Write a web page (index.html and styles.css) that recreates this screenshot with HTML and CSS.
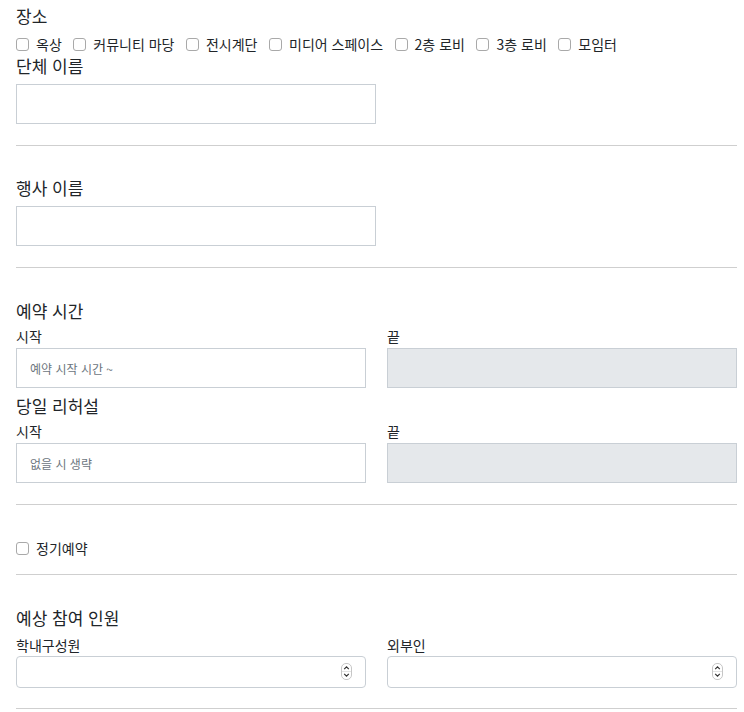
FILE: index.html
```html
<!DOCTYPE html>
<html lang="ko">
<head>
<meta charset="utf-8">
<link rel="stylesheet" href="styles.css">
</head>
<body>
<div class="page">
  <section class="sec sec-first">
    <h3 class="title">장소</h3>
    <div class="checks">
      <label class="check"><input type="checkbox"><span>옥상</span></label>
      <label class="check"><input type="checkbox"><span>커뮤니티 마당</span></label>
      <label class="check"><input type="checkbox"><span>전시계단</span></label>
      <label class="check"><input type="checkbox"><span>미디어 스페이스</span></label>
      <label class="check"><input type="checkbox"><span>2층 로비</span></label>
      <label class="check"><input type="checkbox"><span>3층 로비</span></label>
      <label class="check"><input type="checkbox"><span>모임터</span></label>
    </div>
    <h3 class="title">단체 이름</h3>
    <input class="text wide" type="text">
  </section>
  <hr class="rule">
  <section class="sec sec-second">
    <h3 class="title">행사 이름</h3>
    <input class="text wide" type="text">
  </section>
  <hr class="rule">
  <section class="sec">
    <h3 class="title">예약 시간</h3>
    <div class="cols">
      <div class="col">
        <div class="lbl">시작</div>
        <input class="text" type="text" placeholder="예약 시작 시간 ~">
      </div>
      <div class="col">
        <div class="lbl">끝</div>
        <input class="text" type="text" disabled>
      </div>
    </div>
    <h3 class="title title-sub">당일 리허설</h3>
    <div class="cols">
      <div class="col">
        <div class="lbl">시작</div>
        <input class="text" type="text" placeholder="없을 시 생략">
      </div>
      <div class="col">
        <div class="lbl">끝</div>
        <input class="text" type="text" disabled>
      </div>
    </div>
  </section>
  <hr class="rule">
  <section class="sec sec-check">
    <label class="check"><input type="checkbox"><span>정기예약</span></label>
  </section>
  <hr class="rule">
  <section class="sec sec-last">
    <h3 class="title">예상 참여 인원</h3>
    <div class="cols">
      <div class="col">
        <div class="lbl">학내구성원</div>
        <div class="numwrap">
          <input class="num" type="number">
          <svg class="spin" width="11" height="17" viewBox="0 0 11 17"><rect x="0.5" y="0.5" width="10" height="16" rx="4.5" fill="#fff" stroke="#c6c6c6"/><line x1="1" y1="8.5" x2="10" y2="8.5" stroke="#e4e4e4"/><path d="M3.2 6.2 L5.5 3.9 L7.8 6.2" fill="none" stroke="#333" stroke-width="1.2"/><path d="M3.2 10.8 L5.5 13.1 L7.8 10.8" fill="none" stroke="#333" stroke-width="1.2"/></svg>
        </div>
      </div>
      <div class="col">
        <div class="lbl">외부인</div>
        <div class="numwrap">
          <input class="num" type="number">
          <svg class="spin" width="11" height="17" viewBox="0 0 11 17"><rect x="0.5" y="0.5" width="10" height="16" rx="4.5" fill="#fff" stroke="#c6c6c6"/><line x1="1" y1="8.5" x2="10" y2="8.5" stroke="#e4e4e4"/><path d="M3.2 6.2 L5.5 3.9 L7.8 6.2" fill="none" stroke="#333" stroke-width="1.2"/><path d="M3.2 10.8 L5.5 13.1 L7.8 10.8" fill="none" stroke="#333" stroke-width="1.2"/></svg>
        </div>
      </div>
    </div>
  </section>
  <hr class="rule">
</div>
</body>
</html>
```
FILE: styles.css
```css
html, body {
  margin: 0;
  padding: 0;
  background: #fff;
}
body {
  font-family: "Noto Sans CJK KR", "Noto Sans", sans-serif;
  color: #212529;
}
.page {
  width: 721px;
  padding: 4px 0 0 16px;
}
.sec {
  padding: 31px 0 21px;
}
.sec-first {
  padding-top: 0;
}
.sec-second {
  padding-top: 30px;
}
.sec-check {
  padding: 33px 0 16px;
}
.sec-last {
  padding-bottom: 20px;
}
.title {
  margin: 0;
  font-size: 17px;
  font-weight: 400;
  line-height: 24px;
}
.title-sub {
  margin-top: 6px;
}
.checks {
  display: flex;
  flex-wrap: wrap;
  margin-top: 6px;
  height: 20px;
}
.check {
  display: flex;
  align-items: center;
  height: 20px;
  font-size: 14px;
  margin-right: 11.5px;
}
.check input {
  -webkit-appearance: none;
  appearance: none;
  box-sizing: border-box;
  margin: 0 7px 0 0;
  width: 13px;
  height: 13px;
  border: 1px solid #a9a9a9;
  border-radius: 3px;
  background: #fff;
}
.text {
  display: block;
  box-sizing: border-box;
  width: 100%;
  height: 40px;
  margin: 0;
  padding: 0 13px;
  border: 1px solid #c9cfd5;
  border-radius: 0;
  background: #fff;
  font-family: inherit;
  font-size: 12px;
  color: #212529;
  outline: none;
}
.text::placeholder {
  color: #6c757d;
}
.text:disabled {
  background: #e5e8eb;
}
.wide {
  width: 360px;
  margin-top: 6px;
}
.cols {
  display: grid;
  grid-template-columns: 350px 350px;
  column-gap: 21px;
}
.lbl {
  font-size: 14px;
  line-height: 20px;
  margin: 3px 0 2px;
}
.sec-last .lbl {
  margin: 5px 0 1px;
}
.numwrap {
  position: relative;
}
.num {
  display: block;
  box-sizing: border-box;
  width: 100%;
  height: 32px;
  margin: 0;
  padding: 0 30px 0 12px;
  border: 1px solid #c9cfd5;
  border-radius: 4px;
  background: #fff;
  font-family: inherit;
  font-size: 14px;
  outline: none;
  -moz-appearance: textfield;
  appearance: textfield;
}
.num::-webkit-inner-spin-button,
.num::-webkit-outer-spin-button {
  -webkit-appearance: none;
  margin: 0;
}
.spin {
  position: absolute;
  right: 14px;
  top: 7px;
  display: block;
}
.rule {
  margin: 0;
  border: 0;
  border-top: 1px solid #cfcfcf;
  height: 0;
}
```
